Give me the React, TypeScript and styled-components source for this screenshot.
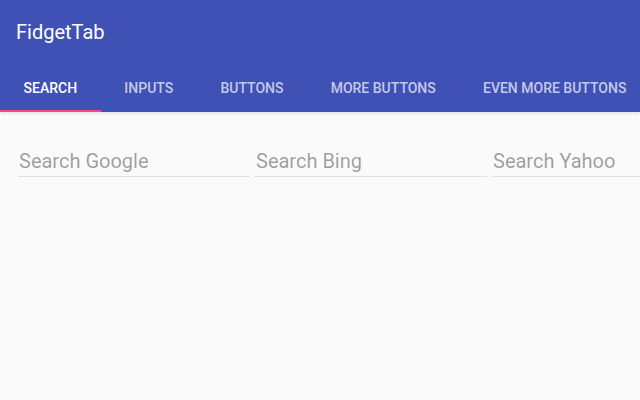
import styled, { createGlobalStyle } from "styled-components";
import { useState } from "react";

const GlobalStyle = createGlobalStyle`
  html, body {
    margin: 0;
    padding: 0;
    background-color: #fafafa;
    font-family: Roboto, "Liberation Sans", sans-serif;
  }
`;

const Page = styled.div`
  width: 640px;
  height: 400px;
  overflow: hidden;
  background-color: #fafafa;
`;

const Header = styled.header`
  background-color: #3f51b5;
  box-shadow: 0 1px 4px rgba(0, 0, 0, 0.12);
`;

const TitleBar = styled.div`
  height: 64px;
  display: flex;
  align-items: center;
  padding: 0 16px;
`;

const Title = styled.h1`
  margin: 0;
  font-size: 20px;
  font-weight: 400;
  color: #ffffff;
`;

const TabBar = styled.nav`
  height: 48px;
  display: flex;
  overflow: hidden;
`;

const Tab = styled.button<{ $active: boolean }>`
  position: relative;
  flex: none;
  height: 48px;
  padding: 0 23.6px;
  border: none;
  background: transparent;
  font-family: inherit;
  font-size: 14px;
  font-weight: 500;
  text-transform: uppercase;
  color: ${(p) => (p.$active ? "#ffffff" : "rgba(255, 255, 255, 0.7)")};
  cursor: pointer;

  &::after {
    content: "";
    position: absolute;
    left: 0;
    right: 0;
    bottom: 0;
    height: 2px;
    background-color: ${(p) => (p.$active ? "#ff4081" : "transparent")};
  }
`;

const Fields = styled.div`
  display: flex;
  gap: 5px;
  padding: 24px 0 0 18px;
`;

const Field = styled.input`
  flex: none;
  width: 232px;
  height: 41px;
  padding: 10px 0 0 1px;
  box-sizing: border-box;
  border: none;
  border-bottom: 1px solid #e0e0e0;
  background: transparent;
  font-family: inherit;
  font-size: 20px;
  color: rgba(0, 0, 0, 0.87);
  outline: none;

  &::placeholder {
    color: rgba(0, 0, 0, 0.38);
  }
`;

const tabs = ["Search", "Inputs", "Buttons", "More Buttons", "Even More Buttons"];
const engines = ["Google", "Bing", "Yahoo"];

const App = () => {
  const [active, setActive] = useState(0);

  return (
    <Page>
      <GlobalStyle />
      <Header>
        <TitleBar>
          <Title>FidgetTab</Title>
        </TitleBar>
        <TabBar>
          {tabs.map((name, i) => (
            <Tab key={name} $active={i === active} onClick={() => setActive(i)}>
              {name}
            </Tab>
          ))}
        </TabBar>
      </Header>
      <Fields>
        {engines.map((engine) => (
          <Field key={engine} placeholder={`Search ${engine}`} />
        ))}
      </Fields>
    </Page>
  );
};

export default App;
